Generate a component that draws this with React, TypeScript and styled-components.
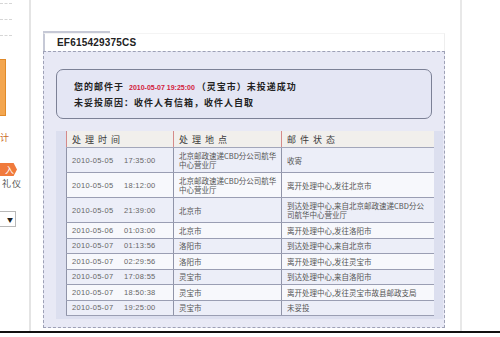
import React from 'react';
import styled, { createGlobalStyle } from 'styled-components';

const GlobalStyle = createGlobalStyle`
  html, body {
    margin: 0;
    padding: 0;
    background: #ffffff;
    font-family: "Liberation Sans", "Noto Sans CJK SC", sans-serif;
  }
`;

type Row = {
  date: string;
  time: string;
  place: string;
  status: string;
  tall?: boolean;
};

const rows: Row[] = [
  { date: '2010-05-05', time: '17:35:00', place: '北京邮政速递CBD分公司航华\n中心营业厅', status: '收寄', tall: true },
  { date: '2010-05-05', time: '18:12:00', place: '北京邮政速递CBD分公司航华\n中心营业厅', status: '离开处理中心,发往北京市', tall: true },
  { date: '2010-05-05', time: '21:39:00', place: '北京市', status: '到达处理中心,来自北京邮政速递CBD分公\n司航华中心营业厅', tall: true },
  { date: '2010-05-06', time: '01:03:00', place: '北京市', status: '离开处理中心,发往洛阳市' },
  { date: '2010-05-07', time: '01:13:56', place: '洛阳市', status: '到达处理中心,来自北京市' },
  { date: '2010-05-07', time: '02:29:56', place: '洛阳市', status: '离开处理中心,发往灵宝市' },
  { date: '2010-05-07', time: '17:08:55', place: '灵宝市', status: '到达处理中心,来自洛阳市' },
  { date: '2010-05-07', time: '18:50:38', place: '灵宝市', status: '离开处理中心,发往灵宝市故县邮政支局' },
  { date: '2010-05-07', time: '19:25:00', place: '灵宝市', status: '未妥投' },
];

function App() {
  return (
    <>
      <GlobalStyle />
      <Frame>
        <Sidebar>
          <DashLine />
          <DashLine />
          <DashLine />
          <OrangeBlock />
          <SideLink>计</SideLink>
          <SideTag>入</SideTag>
          <SideText>礼仪</SideText>
          <SideSelect>
            <span>▼</span>
          </SideSelect>
        </Sidebar>
        <Main>
          <Content>
            <Header>
              <Tab />
              <MailNo>EF615429375CS</MailNo>
            </Header>
            <DashedBox>
              <Notice>
                <NoticeLine>
                  您的邮件于 <RedDate>2010-05-07 19:25:00</RedDate>（灵宝市）未投递成功
                </NoticeLine>
                <NoticeLine>未妥投原因：收件人有信箱，收件人自取</NoticeLine>
              </Notice>
              <TableWrap>
                <Table>
                  <colgroup>
                    <col style={{ width: 107 }} />
                    <col style={{ width: 108 }} />
                    <col style={{ width: 152 }} />
                  </colgroup>
                  <thead>
                    <tr>
                      <HeadCell>处理时间</HeadCell>
                      <HeadCell>处理地点</HeadCell>
                      <HeadCell>邮件状态</HeadCell>
                    </tr>
                  </thead>
                  <tbody>
                    {rows.map((r, i) => (
                      <BodyRow key={i} $odd={i % 2 === 0} $tall={!!r.tall}>
                        <TimeCell>
                          <span>{r.date}</span>
                          <span>{r.time}</span>
                        </TimeCell>
                        <Cell>{r.place}</Cell>
                        <Cell>{r.status}</Cell>
                      </BodyRow>
                    ))}
                  </tbody>
                </Table>
              </TableWrap>
            </DashedBox>
          </Content>
        </Main>
        <RightGutter />
      </Frame>
      <BottomRule />
    </>
  );
}

const Frame = styled.div`
  display: flex;
  height: 331px;
  overflow: hidden;
`;

const Sidebar = styled.div`
  width: 29px;
  flex-shrink: 0;
  border-right: 2px solid #e4e4e4;
  display: flex;
  flex-direction: column;
  overflow: hidden;
  padding-top: 3px;
  font-family: "Noto Sans CJK SC", sans-serif;
`;

const DashLine = styled.div`
  width: 12px;
  border-top: 1px dashed #d6d6d6;
  margin-bottom: 15px;
`;

const OrangeBlock = styled.div`
  width: 5px;
  height: 55px;
  margin-top: 8px;
  background: #f3a64f;
  border: 1px solid #e08a2a;
  border-left: none;
`;

const SideLink = styled.div`
  margin-top: 16px;
  font-size: 9px;
  line-height: 12px;
  color: #c86a28;
`;

const SideTag = styled.div`
  margin-top: 19px;
  width: 14px;
  height: 13px;
  background: #f07a3c;
  color: #ffffff;
  font-size: 9px;
  line-height: 13px;
  text-align: right;
  padding-right: 3px;
  clip-path: polygon(0 0, 80% 0, 100% 50%, 80% 100%, 0 100%);
`;

const SideText = styled.div`
  margin-top: 1px;
  padding-left: 2px;
  font-size: 9px;
  line-height: 13px;
  letter-spacing: 1px;
  color: #555555;
`;

const SideSelect = styled.div`
  margin-top: 21px;
  width: 13px;
  height: 14px;
  border: 1px solid #b8b8b8;
  border-left: none;
  display: flex;
  align-items: center;
  justify-content: flex-end;
  padding-right: 2px;
  font-size: 6px;
  color: #222222;
`;

const Main = styled.div`
  flex: 1;
  padding-left: 12px;
  padding-top: 31px;
`;

const Content = styled.div`
  width: 402px;
  display: flex;
  flex-direction: column;
`;

const Header = styled.div`
  position: relative;
  height: 17px;
  margin-top: 2px;
  background: #ffffff;
  border-left: 2px solid #c6c9d6;
  border-right: 1px solid #eeeeee;
  border-top: 1px solid #f4f4f4;
  display: flex;
  align-items: center;
  padding-left: 12px;
`;

const Tab = styled.div`
  position: absolute;
  left: -2px;
  top: -3px;
  width: 67px;
  height: 2px;
  background: #c6c9d6;
`;

const MailNo = styled.div`
  font-size: 10px;
  font-weight: bold;
  color: #222222;
  letter-spacing: 0.2px;
`;

const DashedBox = styled.div`
  background: #e8e9f5;
  border: 1px dashed #9ea1b6;
  padding: 17px 12px 12px 12px;
  height: 277px;
  box-sizing: border-box;
`;

const Notice = styled.div`
  height: 50px;
  box-sizing: border-box;
  border: 1px solid #7c8196;
  border-radius: 7px;
  background: #e4e6f4;
  padding: 9px 0 0 17px;
  margin-bottom: 12px;
`;

const NoticeLine = styled.div`
  font-family: "Noto Sans CJK SC", sans-serif;
  font-size: 9px;
  font-weight: bold;
  line-height: 15px;
  letter-spacing: 1px;
  color: #222222;
  white-space: nowrap;
`;

const RedDate = styled.span`
  font-family: "Liberation Sans", sans-serif;
  font-size: 7px;
  font-weight: bold;
  letter-spacing: 0;
  color: #d3203c;
  margin: 0 2px;
`;

const TableWrap = styled.div`
  background: #dcdfef;
  padding: 0 0 3px 10px;
  width: 377px;
`;

const Table = styled.table`
  width: 367px;
  border-collapse: collapse;
  table-layout: fixed;
  font-family: "Noto Sans CJK SC", sans-serif;
`;

const HeadCell = styled.th`
  height: 16px;
  padding: 0 0 0 5px;
  background: #f1efec;
  border-left: 1px solid #d48a8a;
  border-bottom: 1px solid #a2a6ba;
  text-align: left;
  font-size: 9px;
  font-weight: normal;
  letter-spacing: 4px;
  color: #3a3a3a;
  line-height: 15px;
`;

const BodyRow = styled.tr<{ $odd: boolean; $tall: boolean }>`
  background: ${(p) => (p.$odd ? '#eceef8' : '#f7f8fc')};
  height: ${(p) => (p.$tall ? '25px' : '15.5px')};
`;

const Cell = styled.td`
  padding: 0 0 0 5px;
  border-left: 1px solid #9094a8;
  border-bottom: 1px solid #9a9eb3;
  font-size: 7.5px;
  line-height: 9px;
  color: #555555;
  white-space: pre;
  overflow: visible;
  vertical-align: middle;
`;

const TimeCell = styled(Cell)`
  font-family: "Liberation Sans", sans-serif;
  font-size: 7.5px;
  letter-spacing: 0.3px;
  color: #666666;
  white-space: nowrap;

  span:first-child {
    display: inline-block;
    width: 52px;
  }
`;

const RightGutter = styled.div`
  width: 38px;
  flex-shrink: 0;
  border-left: 2px solid #e8e8e8;
`;

const BottomRule = styled.div`
  height: 2px;
  background: #111111;
`;

export default App;
